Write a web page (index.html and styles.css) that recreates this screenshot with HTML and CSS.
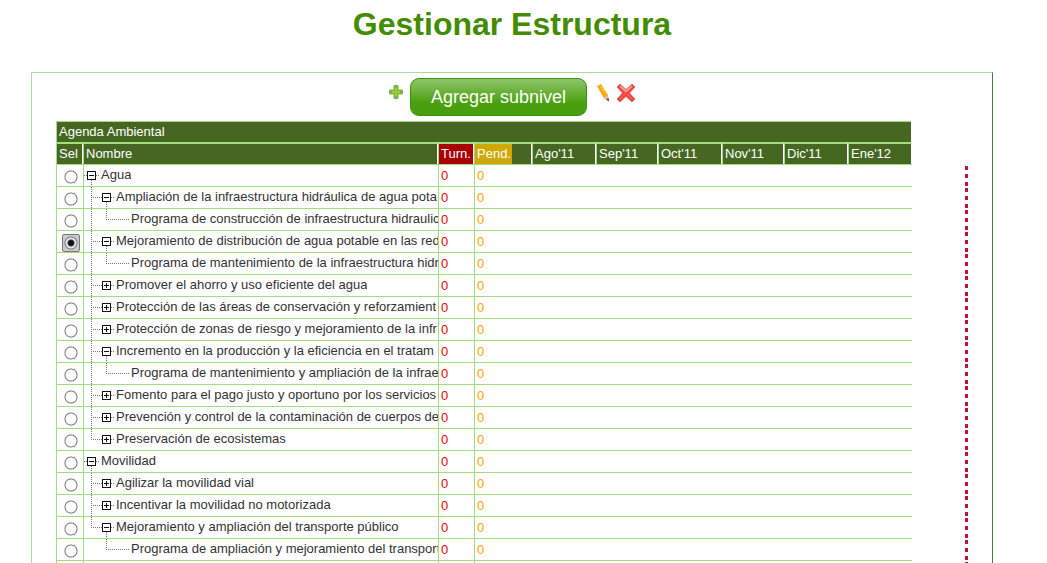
FILE: index.html
```html
<!DOCTYPE html>
<html lang="es">
<head>
<meta charset="utf-8">
<title>Gestionar Estructura</title>
<link rel="stylesheet" href="styles.css">
</head>
<body>
<svg class="defs" aria-hidden="true">
  <symbol id="open" viewBox="0 0 15 21"><path class="dots" d="M12 10.5H15M7.500 15V21M0 10.5H3"/><rect class="box" x="3.500" y="6.500" width="8" height="8"/><path class="sign" d="M5 10.500H10"/></symbol>
  <symbol id="shut" viewBox="0 0 15 21"><path class="dots" d="M12 10.5H15M0 10.5H3"/><rect class="box" x="3.500" y="6.500" width="8" height="8"/><path class="sign" d="M5 10.500H10M7.500 8V13"/></symbol>
  <symbol id="trunk" viewBox="0 0 15 21"><path class="dots" d="M7.500 0V21"/></symbol>
  <symbol id="tee" viewBox="0 0 15 21"><path class="dots" d="M7.500 0V21M9 10.500H15"/></symbol>
  <symbol id="elbow" viewBox="0 0 15 21"><path class="dots" d="M7.500 0V11M9 10.500H15"/></symbol>
  <symbol id="dash" viewBox="0 0 15 21"><path class="dots" d="M0 10.500H15"/></symbol>
</svg>
<h1>Gestionar Estructura</h1>
<main class="panel">
  <div class="toolbar">
    <button class="icon plus" aria-label="Agregar"><svg width="16" height="16" viewBox="0 0 16 16"><path d="M6 1.500h4v4.500h4.500v4h-4.500v4.500h-4v-4.500h-4.500v-4h4.500z" fill="#75b82c" stroke="#7fb568" stroke-linejoin="round"/><path d="M8 4v8M4 8h8" stroke="#a3cc2b" stroke-width="2"/></svg></button>
    <button class="primary">Agregar subnivel</button>
    <button class="icon pencil" aria-label="Editar"><svg width="16" height="20" viewBox="0 0 16 20"><path d="M1 3L5 1L12 12L12.500 17L8 15.500Z" fill="#f9a80c"/><path d="M5 3l0 2 2 0 0 2.500 2 0 0 2.500 2 0" fill="none" stroke="#ffcc45"/><path d="M7.500 15L11.500 12L13 17.500Z" fill="#d8c8aa"/><path d="M10 16.500L12.500 15L13 18.500Z" fill="#444"/></svg></button>
    <button class="icon remove" aria-label="Eliminar"><svg width="20" height="20" viewBox="0 0 20 20"><path d="M4 1L10 6.500L16 1L19 4L13.500 10L19 16L16 19L10 13.500L4 19L1 16L6.500 10L1 4Z" fill="#f4423c" stroke="#d97068" stroke-linejoin="round"/><path d="M4 3L10 8.500L16 3" fill="none" stroke="#ff9a91" stroke-width="2"/><path d="M4 16l5-5M11 11l5 5" stroke="#ff7469"/></svg></button>
  </div>
  <div class="content">
    <table class="agenda">
      <colgroup><col class="c-sel"><col><col class="c-turn"><col class="c-pend"><col class="c-wide"><col class="c-mid"><col class="c-wide"><col class="c-mid"><col class="c-wide"><col class="c-wide"></colgroup>
      <thead>
        <tr class="group"><th colspan="10">Agenda Ambiental</th></tr>
        <tr class="heads"><th>Sel</th><th>Nombre</th><th class="h-turn">Turn.</th><th class="h-pend"><span>Pend.</span></th><th>Ago'11</th><th>Sep'11</th><th>Oct'11</th><th>Nov'11</th><th>Dic'11</th><th>Ene'12</th></tr>
      </thead>
      <tbody>
        <tr><td class="sel"><input type="radio" name="n" id="n1"></td><td class="name"><div><svg><use href="#open"/></svg><label for="n1">Agua</label></div></td><td class="turn">0</td><td class="pend">0</td><td colspan="6"></td></tr>
        <tr><td class="sel"><input type="radio" name="n" id="n2"></td><td class="name"><div><svg><use href="#tee"/></svg><svg><use href="#open"/></svg><label for="n2">Ampliación de la infraestructura hidráulica de agua pota</label></div></td><td class="turn">0</td><td class="pend">0</td><td colspan="6"></td></tr>
        <tr><td class="sel"><input type="radio" name="n" id="n3"></td><td class="name"><div><svg><use href="#trunk"/></svg><svg><use href="#elbow"/></svg><svg><use href="#dash"/></svg><label for="n3">Programa de construcción de infraestructura hidraulic</label></div></td><td class="turn">0</td><td class="pend">0</td><td colspan="6"></td></tr>
        <tr><td class="sel"><input type="radio" name="n" id="n4" checked></td><td class="name"><div><svg><use href="#tee"/></svg><svg><use href="#open"/></svg><label for="n4">Mejoramiento de distribución de agua potable en las red</label></div></td><td class="turn">0</td><td class="pend">0</td><td colspan="6"></td></tr>
        <tr><td class="sel"><input type="radio" name="n" id="n5"></td><td class="name"><div><svg><use href="#trunk"/></svg><svg><use href="#elbow"/></svg><svg><use href="#dash"/></svg><label for="n5">Programa de mantenimiento de la infraestructura hidr</label></div></td><td class="turn">0</td><td class="pend">0</td><td colspan="6"></td></tr>
        <tr><td class="sel"><input type="radio" name="n" id="n6"></td><td class="name"><div><svg><use href="#tee"/></svg><svg><use href="#shut"/></svg><label for="n6">Promover el ahorro y uso eficiente del agua</label></div></td><td class="turn">0</td><td class="pend">0</td><td colspan="6"></td></tr>
        <tr><td class="sel"><input type="radio" name="n" id="n7"></td><td class="name"><div><svg><use href="#tee"/></svg><svg><use href="#shut"/></svg><label for="n7">Protección de las áreas de conservación y reforzamient</label></div></td><td class="turn">0</td><td class="pend">0</td><td colspan="6"></td></tr>
        <tr><td class="sel"><input type="radio" name="n" id="n8"></td><td class="name"><div><svg><use href="#tee"/></svg><svg><use href="#shut"/></svg><label for="n8">Protección de zonas de riesgo y mejoramiento de la infr</label></div></td><td class="turn">0</td><td class="pend">0</td><td colspan="6"></td></tr>
        <tr><td class="sel"><input type="radio" name="n" id="n9"></td><td class="name"><div><svg><use href="#tee"/></svg><svg><use href="#open"/></svg><label for="n9">Incremento en la producción y la eficiencia en el tratam</label></div></td><td class="turn">0</td><td class="pend">0</td><td colspan="6"></td></tr>
        <tr><td class="sel"><input type="radio" name="n" id="n10"></td><td class="name"><div><svg><use href="#trunk"/></svg><svg><use href="#elbow"/></svg><svg><use href="#dash"/></svg><label for="n10">Programa de mantenimiento y ampliación de la infrae</label></div></td><td class="turn">0</td><td class="pend">0</td><td colspan="6"></td></tr>
        <tr><td class="sel"><input type="radio" name="n" id="n11"></td><td class="name"><div><svg><use href="#tee"/></svg><svg><use href="#shut"/></svg><label for="n11">Fomento para el pago justo y oportuno por los servicios</label></div></td><td class="turn">0</td><td class="pend">0</td><td colspan="6"></td></tr>
        <tr><td class="sel"><input type="radio" name="n" id="n12"></td><td class="name"><div><svg><use href="#tee"/></svg><svg><use href="#shut"/></svg><label for="n12">Prevención y control de la contaminación de cuerpos de</label></div></td><td class="turn">0</td><td class="pend">0</td><td colspan="6"></td></tr>
        <tr><td class="sel"><input type="radio" name="n" id="n13"></td><td class="name"><div><svg><use href="#elbow"/></svg><svg><use href="#shut"/></svg><label for="n13">Preservación de ecosistemas</label></div></td><td class="turn">0</td><td class="pend">0</td><td colspan="6"></td></tr>
        <tr><td class="sel"><input type="radio" name="n" id="n14"></td><td class="name"><div><svg><use href="#open"/></svg><label for="n14">Movilidad</label></div></td><td class="turn">0</td><td class="pend">0</td><td colspan="6"></td></tr>
        <tr><td class="sel"><input type="radio" name="n" id="n15"></td><td class="name"><div><svg><use href="#tee"/></svg><svg><use href="#shut"/></svg><label for="n15">Agilizar la movilidad vial</label></div></td><td class="turn">0</td><td class="pend">0</td><td colspan="6"></td></tr>
        <tr><td class="sel"><input type="radio" name="n" id="n16"></td><td class="name"><div><svg><use href="#tee"/></svg><svg><use href="#shut"/></svg><label for="n16">Incentivar la movilidad no motorizada</label></div></td><td class="turn">0</td><td class="pend">0</td><td colspan="6"></td></tr>
        <tr><td class="sel"><input type="radio" name="n" id="n17"></td><td class="name"><div><svg><use href="#elbow"/></svg><svg><use href="#open"/></svg><label for="n17">Mejoramiento y ampliación del transporte público</label></div></td><td class="turn">0</td><td class="pend">0</td><td colspan="6"></td></tr>
        <tr><td class="sel"><input type="radio" name="n" id="n18"></td><td class="name"><div><svg></svg><svg><use href="#elbow"/></svg><svg><use href="#dash"/></svg><label for="n18">Programa de ampliación y mejoramiento del transport</label></div></td><td class="turn">0</td><td class="pend">0</td><td colspan="6"></td></tr>
        <tr><td class="sel"></td><td class="name"></td><td class="turn"></td><td class="pend"></td><td colspan="6"></td></tr>
      </tbody>
    </table>
    <div class="today"></div>
  </div>
</main>
</body>
</html>
```
FILE: styles.css
```css
* { box-sizing: border-box; }

body {
  margin: 0;
  height: 100vh;
  overflow: hidden;
  background: #fff;
  color: #333;
  font: 13px/20px "Liberation Sans", Arial, sans-serif;
}

.defs { position: absolute; width: 0; height: 0; }
.dots { fill: none; stroke: #777; stroke-dasharray: 1 1; }
.box { fill: #fff; stroke: #111; }
.sign { fill: none; stroke: #111; }

h1 {
  margin: 0 54px 24px 31px;
  text-align: center;
  color: #438c00;
  font-size: 32px;
  line-height: 48px;
}

.panel {
  margin: 0 54px 0 31px;
  padding: 5px 24px 0;
  border: 1px solid #a9dba5;
  border-right-color: #4b7a35;
  border-bottom-color: #4b7a35;
}

.toolbar {
  display: flex;
  justify-content: center;
  align-items: flex-start;
  margin-bottom: 5px;
}

button { border: 0; padding: 0; background: none; font-family: inherit; cursor: pointer; }
.icon svg { display: block; }
.plus { margin: 6px 6px 0 0; }
.pencil { margin: 5px 4px 0 9px; }
.remove { margin-top: 5px; }

.primary {
  height: 38px;
  padding: 0 20px;
  border: 1px solid #3f8f10;
  border-radius: 9px;
  background: linear-gradient(#8fc66a, #4aa00f 65%, #479f0a);
  color: #fff;
  font-size: 18px;
}

.content { display: flex; }

.agenda {
  flex: 1;
  table-layout: fixed;
  border-spacing: 0;
  width: 0;
}

.c-sel { width: 27px; }
.c-turn { width: 36px; }
.c-pend { width: 58px; }
.c-wide { width: 64px; }
.c-mid { width: 62px; }

th, td { height: 22px; padding: 0; border-top: 1px solid #a6dc80; }
th {
  padding-left: 2px;
  border-left: 1px solid #a6dc80;
  border-right: 1px solid #fff;
  background: #466722;
  color: #fff;
  font-weight: normal;
  text-align: left;
}
.group th { border-bottom: 1px solid #a6dc80; }
.heads th { height: 21px; }
.heads .h-turn { background: #a90000; }
.heads .h-pend { padding-left: 0; }
.h-pend span { display: block; width: 37px; padding-left: 2px; background: #cfa900; }

.sel, .name, .turn, .pend { border-left: 1px solid #a6dc80; }
.turn, .pend { padding: 1px 0 0 2px; }
.turn { color: #f00000; }
.pend { color: #ffa500; }

.sel { padding: 2px 0 0 1px; line-height: 0; text-align: center; }
.sel input {
  appearance: none;
  width: 18px;
  height: 18px;
  margin: 0;
  border: 1px solid transparent;
  border-radius: 2px;
  background: radial-gradient(circle, transparent 5px, #777 6px, transparent 7px);
}
.sel input:checked {
  border-color: #777;
  background: radial-gradient(circle, #111 2px, #333 3px, #e4e6e8 4px, #e4e6e8 5px, #777 6px, #c9cbd0 7px);
}

.name div { display: flex; height: 21px; white-space: nowrap; }
.name svg { flex: none; width: 15px; height: 21px; }
.name label { min-width: 0; padding-left: 2px; overflow: hidden; }

.today {
  flex: none;
  width: 3px;
  margin: 45px 0 0 53px;
  background: linear-gradient(#c8102e 4px, transparent 4px 8px, #c8102e 8px 12px, transparent 12px 16px, #c8102e 16px 20px, transparent 20px) 0 0 / 3px 22px;
}
```
